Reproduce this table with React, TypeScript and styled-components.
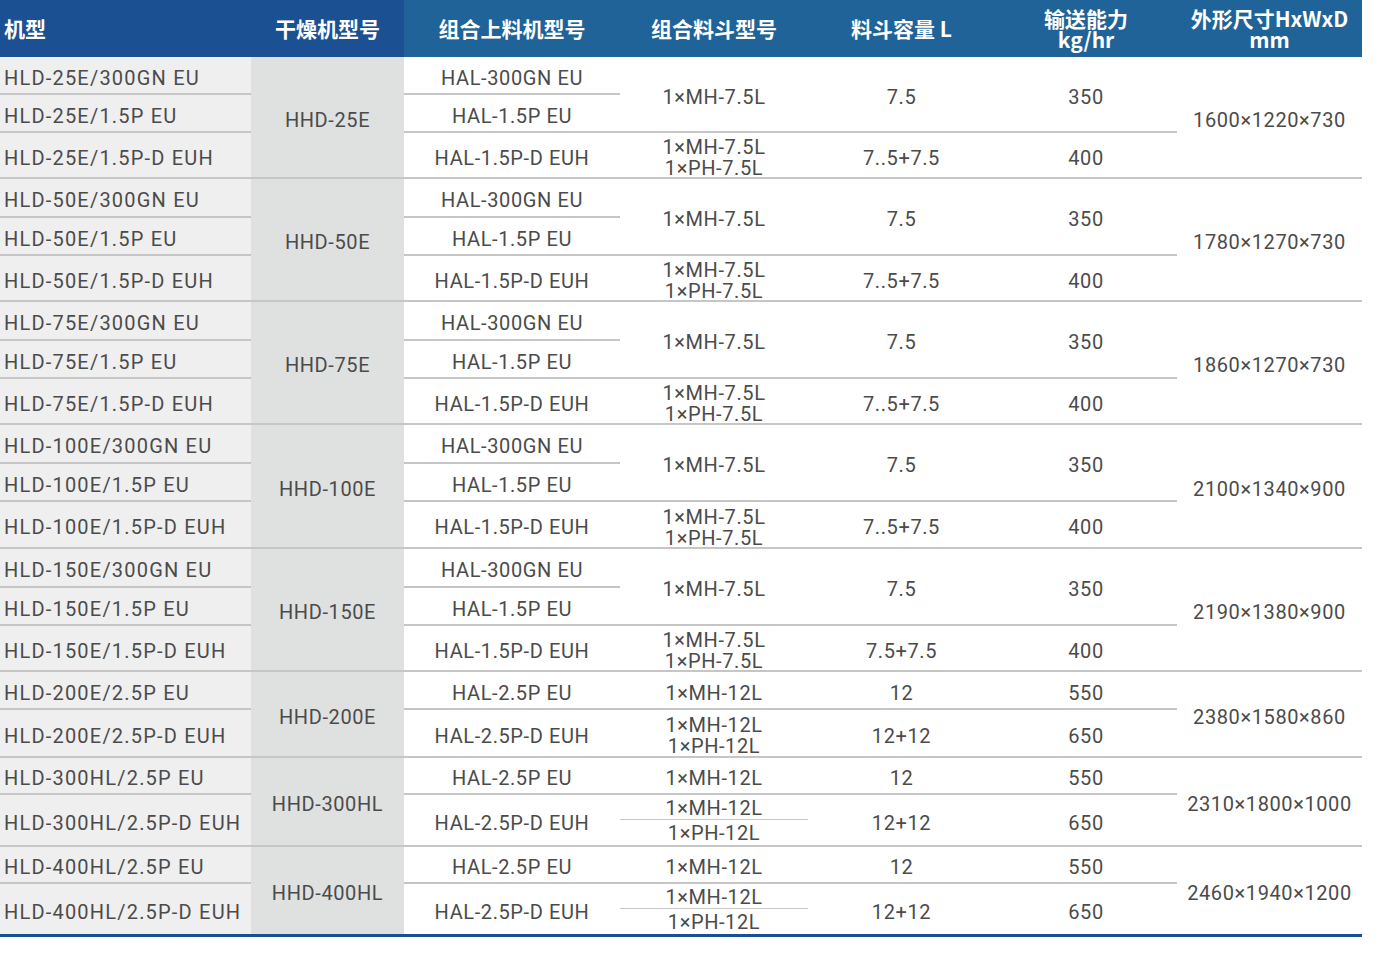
import React from "react";
import styled, { createGlobalStyle } from "styled-components";

const GlobalStyle = createGlobalStyle`
  html, body { margin: 0; padding: 0; background: #ffffff; }
  * { box-sizing: border-box; }
`;

const COLS = "251px 153px 216px 188px 187px 182px 185px";
const LINE = "#c6c6c6";
const TEXT = "#4b4b4b";

const Table = styled.div`
  width: 1362px;
  display: flex;
  flex-direction: column;
  border-bottom: 3px solid #1a4f91;
  font-family: Roboto, "Liberation Sans", "Noto Sans CJK SC", sans-serif;
`;

const Header = styled.div`
  display: grid;
  grid-template-columns: ${COLS};
  height: 57px;
  background: #1f6398;
`;

const HeadCell = styled.div<{ $dark?: boolean; $left?: boolean }>`
  display: flex;
  align-items: center;
  justify-content: ${(p) => (p.$left ? "flex-start" : "center")};
  padding-left: ${(p) => (p.$left ? "4px" : "0")};
  background: ${(p) => (p.$dark ? "#1b5192" : "transparent")};
  color: #ffffff;
  font-family: "Noto Sans CJK SC", "Noto Sans", sans-serif;
  font-weight: 700;
  font-size: 21px;
  line-height: 21px;
  text-align: center;
  white-space: pre-line;
`;

const Group = styled.div<{ $rows: string }>`
  display: grid;
  grid-template-columns: ${COLS};
  grid-template-rows: ${(p) => p.$rows};
`;

type Kind = "model" | "dryer" | "plain";

const Cell = styled.div<{
  $kind: Kind;
  $last: boolean;
  $col: number;
  $row: number;
  $span?: number;
  $split?: boolean;
}>`
  grid-column: ${(p) => p.$col};
  grid-row: ${(p) => `${p.$row} / span ${p.$span ?? 1}`};
  display: flex;
  flex-direction: column;
  align-items: ${(p) => (p.$kind === "model" ? "flex-start" : "center")};
  justify-content: center;
  padding-left: ${(p) => (p.$kind === "model" ? "4px" : "0")};
  padding-top: ${(p) => (p.$split ? "2px" : "6px")};
  background: ${(p) =>
    p.$kind === "model" ? "#efefef" : p.$kind === "dryer" ? "#dfe1e1" : "#ffffff"};
  border-bottom: ${(p) => (p.$last ? "none" : `2px solid ${LINE}`)};
  color: ${TEXT};
  font-size: 20px;
  line-height: 21px;
  letter-spacing: ${(p) => (p.$kind === "model" ? "1.2px" : "0.6px")};
  white-space: nowrap;
`;

const Line = styled.span`
  display: block;
  height: 21px;
`;

const Half = styled.div<{ $top?: boolean }>`
  flex: 1;
  width: 100%;
  display: flex;
  align-items: ${(p) => (p.$top ? "flex-end" : "flex-start")};
  justify-content: center;
  border-bottom: ${(p) => (p.$top ? `1px solid ${LINE}` : "none")};
  padding-bottom: ${(p) => (p.$top ? "0" : "0")};
  padding-top: ${(p) => (p.$top ? "0" : "3px")};
`;

type Block = {
  span: number;
  hopper: string[];
  cap: string;
  out: string;
  split?: boolean;
};

type GroupData = {
  rows: number[];
  models: string[];
  dryer: string;
  loaders: string[];
  blocks: Block[];
  size: string;
};

const triple = (n: string, size: string, cap: string, rows: number[]): GroupData => ({
  rows,
  models: [`HLD-${n}/300GN EU`, `HLD-${n}/1.5P EU`, `HLD-${n}/1.5P-D EUH`],
  dryer: `HHD-${n}`,
  loaders: ["HAL-300GN EU", "HAL-1.5P EU", "HAL-1.5P-D EUH"],
  blocks: [
    { span: 2, hopper: ["1×MH-7.5L"], cap: "7.5", out: "350" },
    { span: 1, hopper: ["1×MH-7.5L", "1×PH-7.5L"], cap, out: "400" },
  ],
  size,
});

const double = (n: string, size: string, split: boolean, rows: number[]): GroupData => ({
  rows,
  models: [`HLD-${n}/2.5P EU`, `HLD-${n}/2.5P-D EUH`],
  dryer: `HHD-${n}`,
  loaders: ["HAL-2.5P EU", "HAL-2.5P-D EUH"],
  blocks: [
    { span: 1, hopper: ["1×MH-12L"], cap: "12", out: "550" },
    { span: 1, hopper: ["1×MH-12L", "1×PH-12L"], cap: "12+12", out: "650", split },
  ],
  size,
});

const groups: GroupData[] = [
  triple("25E", "1600×1220×730", "7..5+7.5", [38, 38, 46]),
  triple("50E", "1780×1270×730", "7..5+7.5", [39, 38, 46]),
  triple("75E", "1860×1270×730", "7..5+7.5", [39, 38, 46]),
  triple("100E", "2100×1340×900", "7..5+7.5", [39, 38, 47]),
  triple("150E", "2190×1380×900", "7.5+7.5", [39, 38, 46]),
  double("200E", "2380×1580×860", false, [38, 48]),
  double("300HL", "2310×1800×1000", true, [37, 52]),
  double("400HL", "2460×1940×1200", true, [37, 50]),
];

const headers: { text: string; dark?: boolean; left?: boolean }[] = [
  { text: "机型", dark: true, left: true },
  { text: "干燥机型号", dark: true },
  { text: "组合上料机型号" },
  { text: "组合料斗型号" },
  { text: "料斗容量 L" },
  { text: "输送能力\nkg/hr" },
  { text: "外形尺寸HxWxD\nmm" },
];

function GroupRows({ g, last }: { g: GroupData; last: boolean }) {
  const n = g.rows.length;
  let r = 1;
  const blockCells = g.blocks.map((b, i) => {
    const start = r;
    r += b.span;
    const isLast = last && start + b.span - 1 === n;
    return (
      <React.Fragment key={i}>
        <Cell $kind="plain" $last={isLast} $col={4} $row={start} $span={b.span} $split={b.split}>
          {b.split ? (
            <>
              <Half $top>{b.hopper[0]}</Half>
              <Half>{b.hopper[1]}</Half>
            </>
          ) : (
            b.hopper.map((h) => <Line key={h}>{h}</Line>)
          )}
        </Cell>
        <Cell $kind="plain" $last={isLast} $col={5} $row={start} $span={b.span}>
          {b.cap}
        </Cell>
        <Cell $kind="plain" $last={isLast} $col={6} $row={start} $span={b.span}>
          {b.out}
        </Cell>
      </React.Fragment>
    );
  });

  return (
    <Group $rows={g.rows.map((h) => `${h}px`).join(" ")}>
      {g.models.map((m, i) => (
        <Cell key={m} $kind="model" $last={last && i === n - 1} $col={1} $row={i + 1}>
          {m}
        </Cell>
      ))}
      <Cell $kind="dryer" $last={last} $col={2} $row={1} $span={n}>
        {g.dryer}
      </Cell>
      {g.loaders.map((l, i) => (
        <Cell key={l} $kind="plain" $last={last && i === n - 1} $col={3} $row={i + 1}>
          {l}
        </Cell>
      ))}
      {blockCells}
      <Cell $kind="plain" $last={last} $col={7} $row={1} $span={n}>
        {g.size}
      </Cell>
    </Group>
  );
}

export default function App() {
  return (
    <>
      <GlobalStyle />
      <Table>
        <Header>
          {headers.map((h) => (
            <HeadCell key={h.text} $dark={h.dark} $left={h.left}>
              {h.text}
            </HeadCell>
          ))}
        </Header>
        {groups.map((g, i) => (
          <GroupRows key={g.dryer} g={g} last={i === groups.length - 1} />
        ))}
      </Table>
    </>
  );
}
